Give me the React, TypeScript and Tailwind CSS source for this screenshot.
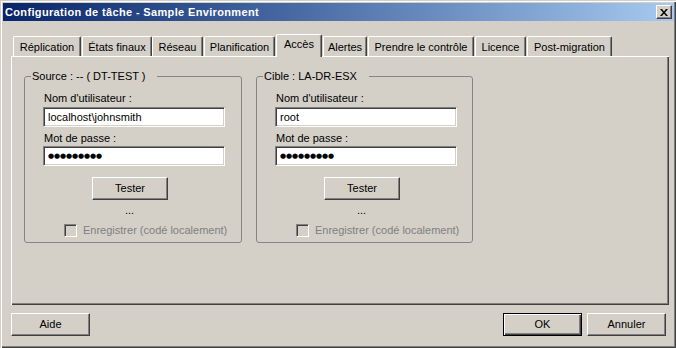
import React from 'react';

const tabs = [
  { label: 'Réplication', cls: 'ml-[2px] w-[68px]' },
  { label: 'États finaux', cls: 'ml-[1px] w-[70px]' },
  { label: 'Réseau', cls: 'ml-0 w-[51px]' },
  { label: 'Planification', cls: 'ml-[1px] w-[71px]' },
  { label: 'Accès', cls: 'ml-[1px] w-[46px]', active: true },
  { label: 'Alertes', cls: 'ml-[1px] w-[44px]' },
  { label: 'Prendre le contrôle', cls: 'ml-[1px] w-[106px]' },
  { label: 'Licence', cls: 'ml-[1px] w-[51px]' },
  { label: 'Post-migration', cls: 'ml-[1px] w-[85px]' },
];

const raised =
  'border border-t-white border-l-white border-r-[#404040] border-b-[#404040] shadow-[inset_-1px_-1px_0_#808080] bg-[#d4d0c8]';
const sunken =
  'border border-t-[#808080] border-l-[#808080] border-r-white border-b-white shadow-[inset_1px_1px_0_#404040,inset_-1px_-1px_0_#d4d0c8]';

const Password = () => (
  <div className="flex items-center pl-[4px] pt-[1px] font-['DejaVu_Sans',sans-serif] text-[7px] leading-none text-black">
    {Array.from({ length: 9 }).map((_, i) => (
      <span key={i} className="inline-block w-[6px] text-center">
        ●
      </span>
    ))}
  </div>
);

const AccessGroup = ({ title, user, width }: { title: string; user: string; width: string }) => (
  <fieldset className={`${width} h-[173px] border border-[#858585] rounded-[3px]`}>
    <legend className="ml-[6px] pl-[1px] pr-[12px] leading-[13px]">{title}</legend>
    <div className="pl-[18px] pt-[9px]">
      <div className="pl-[1px] leading-[13px]">Nom d'utilisateur :</div>
      <div className={`mt-[2px] w-[182px] h-[20px] bg-white flex items-center pl-[4px] ${sunken}`}>{user}</div>
      <div className="mt-[5px] pl-[1px] leading-[13px]">Mot de passe :</div>
      <div className={`mt-[1px] w-[182px] h-[20px] bg-white flex items-center ${sunken}`}>
        <Password />
      </div>
      <div className="mt-[11px] ml-[49px] w-[76px]">
        <button className={`w-[76px] h-[23px] flex items-center justify-center ${raised}`}>Tester</button>
      </div>
      <div className="mt-[4px] pl-[82px] leading-[13px]">...</div>
      <div className="mt-[7px] ml-[21px] flex items-center gap-[6px] h-[13px]">
        <span className={`w-[13px] h-[13px] bg-[#d4d0c8] ${sunken}`} />
        <span className="text-[#808080] leading-[13px]">Enregistrer (codé localement)</span>
      </div>
    </div>
  </fieldset>
);

export default function App() {
  return (
    <div className="w-[676px] h-[348px] bg-[#d4d0c8] pl-[3px] pt-[3px] pr-[2px] pb-[2px] shadow-[inset_1px_1px_0_#d4d0c8,inset_2px_2px_0_#fff,inset_-1px_-1px_0_#404040,inset_-2px_-2px_0_#808080] font-['Liberation_Sans',Arial,sans-serif] text-[11px] text-black flex flex-col">
      {/* title bar */}
      <div className="h-[18px] flex items-center justify-between bg-gradient-to-r from-[#0a246a] to-[#a6caf0] pl-[2px] pr-[2px]">
        <span className="text-white font-bold text-[11px] tracking-[0.35px] leading-[18px]">
          Configuration de tâche - Sample Environment
        </span>
        <button className={`w-[16px] h-[14px] flex items-center justify-center ${raised}`}>
          <svg width="8" height="7" viewBox="0 0 8 7">
            <path d="M0 0h2l2 2.5L6 0h2L5 3.5 8 7H6L4 4.5 2 7H0l3-3.5z" fill="#000" />
          </svg>
        </button>
      </div>

      {/* tab control */}
      <div className="ml-[8px] mt-[13px] w-[658px] flex flex-col">
        <div className="h-[22px] flex items-end">
          {tabs.map((t) =>
            t.active ? (
              <div
                key={t.label}
                className={`${t.cls} h-[23px] -mb-[1px] relative z-10 bg-[#d4d0c8] border-t border-l border-r border-t-white border-l-white border-r-[#404040] rounded-t-[2px] shadow-[inset_-1px_0_0_#808080] flex items-center justify-center pb-[3px]`}
              >
                {t.label}
              </div>
            ) : (
              <div
                key={t.label}
                className={`${t.cls} h-[20px] border-t border-l border-r border-t-white border-l-white border-r-[#404040] rounded-t-[2px] shadow-[inset_-1px_0_0_#808080] flex items-center justify-center pt-[1px]`}
              >
                {t.label}
              </div>
            )
          )}
        </div>
        <div className="h-[249px] shadow-[inset_1px_1px_0_#fff,inset_-1px_-1px_0_#404040,inset_-2px_-2px_0_#808080] pt-[14px] pl-[13px] flex gap-[14px] items-start">
          <AccessGroup title="Source : -- ( DT-TEST )" user="localhost\johnsmith" width="w-[218px]" />
          <AccessGroup title="Cible : LA-DR-ESX" user="root" width="w-[217px]" />
        </div>
      </div>

      {/* dialog buttons */}
      <div className="mx-[8px] mt-[8px] flex items-center">
        <button className={`w-[79px] h-[23px] flex items-center justify-center ${raised}`}>Aide</button>
        <div className="flex-1" />
        <button className="w-[79px] h-[23px] flex items-center justify-center bg-[#d4d0c8] border border-black shadow-[inset_1px_1px_0_#fff,inset_-1px_-1px_0_#404040,inset_-2px_-2px_0_#808080]">
          OK
        </button>
        <button className={`ml-[5px] w-[79px] h-[23px] flex items-center justify-center ${raised}`}>Annuler</button>
      </div>
    </div>
  );
}
